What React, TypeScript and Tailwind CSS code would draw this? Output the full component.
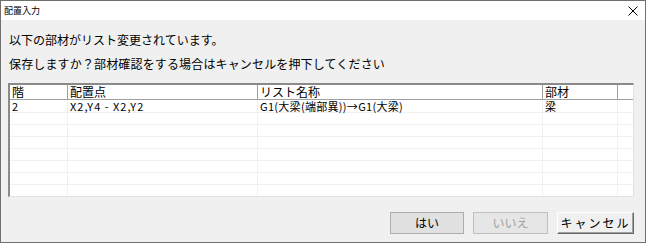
import React from "react";

const rows = [
  { a: "2", b: "X2,Y4 - X2,Y2", c: "G1(大梁(端部異))→G1(大梁)", d: "梁" },
  {}, {}, {}, {}, {}, {}, {},
] as Array<{ a?: string; b?: string; c?: string; d?: string }>;

const cols = ["w-[58px]", "w-[190px]", "w-[285px]", "w-[75px]", "flex-1"];
const track = ["", "tracking-[1px]", "tracking-[0.3px]", "", ""];

export default function App() {
  return (
    <div
      className="w-[646px] h-[243px] border border-[#707070] bg-[#f0f0f0] flex flex-col overflow-hidden text-black"
      style={{ fontFamily: '"Noto Sans CJK JP", "Noto Sans", sans-serif' }}
    >
      <div className="h-[19px] bg-white flex items-center justify-between pl-[3px] pr-[6px] shrink-0">
        <span className="text-[9px] leading-none">配置入力</span>
        <svg width="10" height="10" viewBox="0 0 10 10" className="mr-[1px]">
          <path d="M0.5 0.5 L9.5 9.5 M9.5 0.5 L0.5 9.5" stroke="#000" strokeWidth="1" />
        </svg>
      </div>
      <div className="flex flex-col flex-1 pl-[7px] pr-[10px]">
        <div className="mt-[12px] text-[12px] leading-[16px] pl-[1px]">以下の部材がリスト変更されています。</div>
        <div className="mt-[8px] text-[12px] leading-[16px] pl-[1px] tracking-[0.15px]">保存しますか？部材確認をする場合はキャンセルを押下してください</div>
        <div className="mt-[11px] w-[626px] h-[114px] border-t-2 border-l-2 border-t-[#8a8a8a] border-l-[#8a8a8a] border-b border-r border-b-[#e3e3e3] border-r-[#e3e3e3] bg-white overflow-hidden">
          <div className="flex h-[15px] border-b border-[#a0a0a0] text-[12px] leading-[14px]">
            {["階", "配置点", "リスト名称", "部材", ""].map((h, i) => (
              <div key={i} className={`${cols[i]} h-full pl-[2px] ${i < 4 ? "border-r border-[#a0a0a0]" : ""}`}>
                {h}
              </div>
            ))}
          </div>
          {rows.map((r, ri) => (
            <div key={ri} className={`flex ${ri === 0 ? "h-[13px]" : "h-[12px]"} border-b border-[#f0f0f0] text-[11px] leading-[12px]`}>
              {[r.a, r.b, r.c, r.d, ""].map((v, i) => (
                <div key={i} className={`${cols[i]} ${track[i]} h-full pl-[2px] whitespace-nowrap ${i < 4 ? "border-r border-[#f0f0f0]" : ""}`}>
                  {v}
                </div>
              ))}
            </div>
          ))}
        </div>
        <div className="mt-[15px] flex justify-end gap-[9px] pr-[1px]">
          <button className="w-[74px] h-[22px] bg-[#e1e1e1] border border-[#adadad] text-[12px] leading-none">はい</button>
          <button className="w-[75px] h-[22px] bg-[#e6e6e6] border border-[#bfbfbf] text-[12px] leading-none text-[#a0a0a0]">いいえ</button>
          <button className="w-[77px] h-[22px] bg-[#f0f0f0] border-t border-l border-white border-r border-b border-r-[#696969] border-b-[#696969] shadow-[inset_-1px_-1px_0_#a0a0a0] text-[12px] leading-none tracking-[2px]">キャンセル</button>
        </div>
      </div>
    </div>
  );
}
